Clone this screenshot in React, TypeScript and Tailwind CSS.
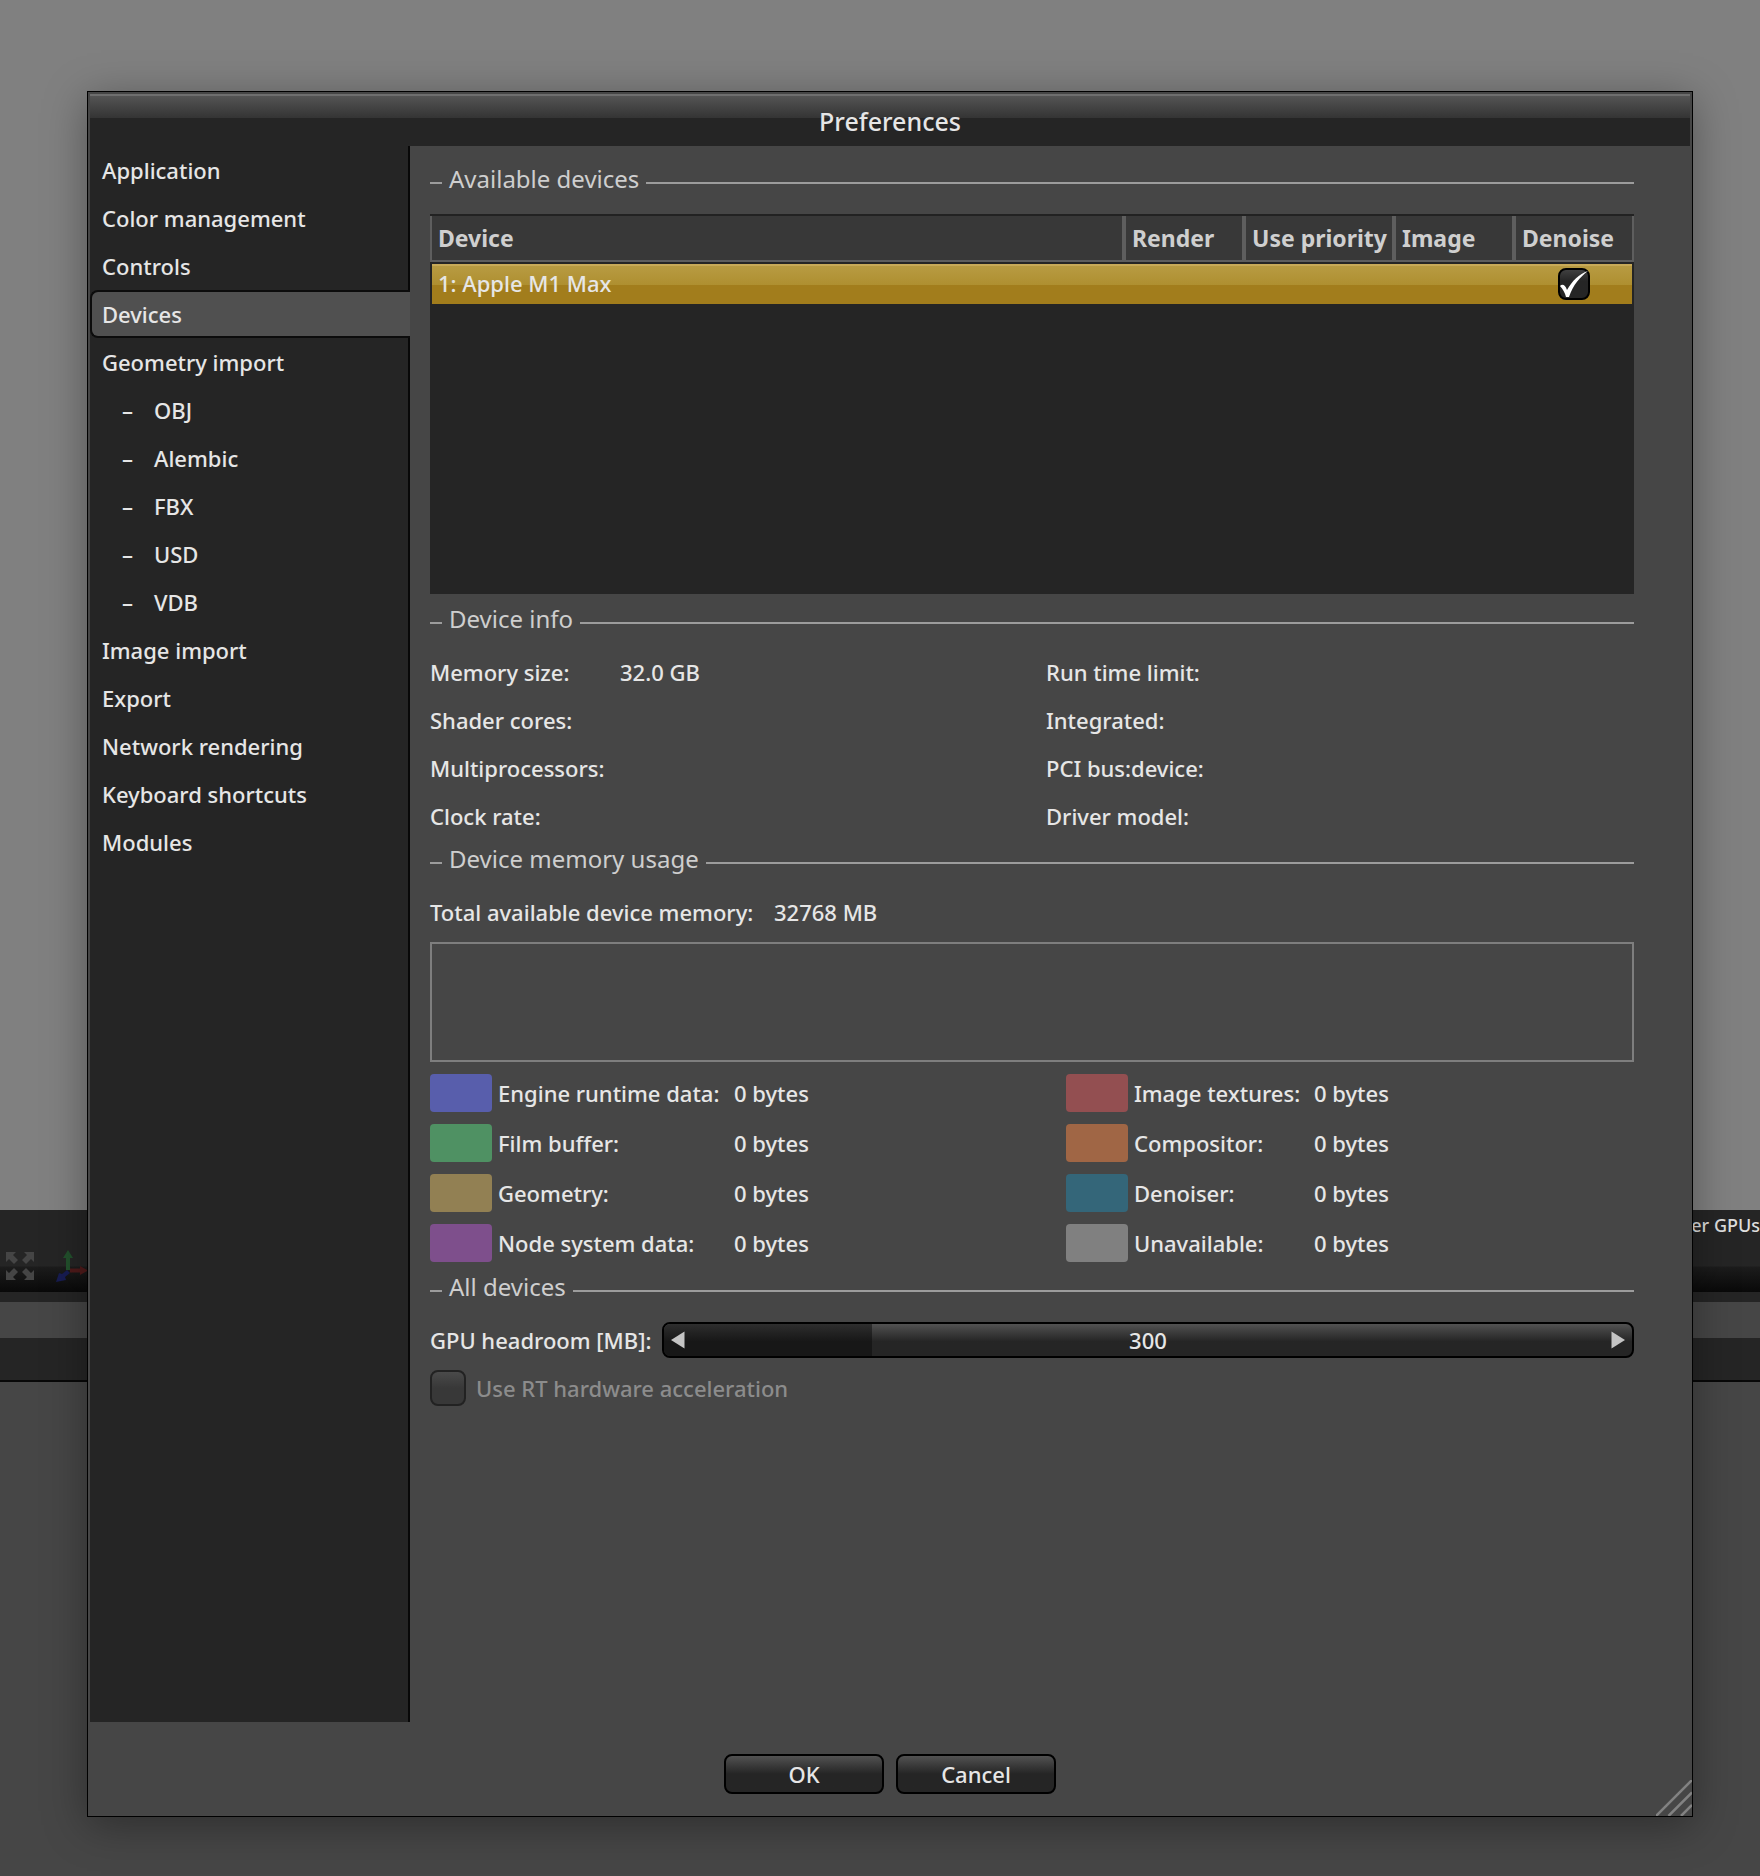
import { useState, type ReactNode } from "react";

type NavItem = { label: string; child?: boolean };

const NAV: NavItem[] = [
  { label: "Application" },
  { label: "Color management" },
  { label: "Controls" },
  { label: "Devices" },
  { label: "Geometry import" },
  { label: "OBJ", child: true },
  { label: "Alembic", child: true },
  { label: "FBX", child: true },
  { label: "USD", child: true },
  { label: "VDB", child: true },
  { label: "Image import" },
  { label: "Export" },
  { label: "Network rendering" },
  { label: "Keyboard shortcuts" },
  { label: "Modules" },
];

const COLUMNS = [
  { label: "Device", width: "" },
  { label: "Render", width: "w-[120px]" },
  { label: "Use priority", width: "w-[150px]" },
  { label: "Image", width: "w-[120px]" },
  { label: "Denoise", width: "w-[120px]" },
];

const USAGE_LEFT = [
  { label: "Engine runtime data:", color: "bg-[#585eac]" },
  { label: "Film buffer:", color: "bg-[#4f9163]" },
  { label: "Geometry:", color: "bg-[#928053]" },
  { label: "Node system data:", color: "bg-[#7e4f8c]" },
];

const USAGE_RIGHT = [
  { label: "Image textures:", color: "bg-[#934f51]" },
  { label: "Compositor:", color: "bg-[#a06645]" },
  { label: "Denoiser:", color: "bg-[#346679]" },
  { label: "Unavailable:", color: "bg-[#808080]" },
];

function SectionHeading({ children }: { children: ReactNode }) {
  return (
    <div className="mb-0.5 flex h-[46px] items-center">
      <span className="h-0.5 w-3 bg-[#9c9c9c]" />
      <h2 className="px-[7px] pb-2 text-[24px] leading-8 font-normal whitespace-nowrap text-[#cecece]">{children}</h2>
      <span className="h-0.5 flex-1 bg-[#9c9c9c]" />
    </div>
  );
}

function InfoRow({ label, value }: { label: string; value?: string }) {
  return (
    <div className="flex h-12 items-center">
      <dt className="w-[190px] shrink-0">{label}</dt>
      <dd>{value}</dd>
    </div>
  );
}

function UsageList({ items, labelWidth }: { items: typeof USAGE_LEFT; labelWidth: string }) {
  return (
    <dl className="flex flex-col gap-3">
      {items.map((item) => (
        <div key={item.label} className="flex h-[38px] items-center">
          <span className={`mr-1.5 h-[38px] w-[62px] rounded ${item.color}`} />
          <dt className={`${labelWidth} whitespace-nowrap`}>{item.label}</dt>
          <dd>0 bytes</dd>
        </div>
      ))}
    </dl>
  );
}

function ExpandIcon() {
  return (
    <svg viewBox="0 0 28 28" className="size-7" fill="#454545" aria-hidden="true">
      <path d="M0 0H10L7 3L12 8L8 12L3 7L0 10Z" />
      <path d="M28 0H18L21 3L16 8L20 12L25 7L28 10Z" />
      <path d="M0 28H10L7 25L12 20L8 16L3 21L0 18Z" />
      <path d="M28 28H18L21 25L16 20L20 16L25 21L28 18Z" />
    </svg>
  );
}

function AxesIcon() {
  return (
    <svg viewBox="0 0 34 34" className="h-[34px] w-[34px] shrink-0" aria-hidden="true">
      <path d="M10 20H14V8H17L12 0L7 8H10Z" fill="#22502c" />
      <path d="M14 18.5V22.5H24V25L32 20.5L24 16V18.5Z" fill="#4f1a1a" />
      <path d="M11 20L14 23L9 27L10 30L0 32L3 23L6 24L11 20Z" fill="#171c52" />
    </svg>
  );
}

function Backdrop() {
  return (
    <div className="col-start-1 row-start-1 flex min-w-0 flex-col overflow-hidden" aria-hidden="true">
      <div className="h-[1210px] bg-[#808080]" />
      <div className="flex h-[82px] items-start justify-between bg-[linear-gradient(#252525_0_56px,#1c1c1c_57px,#090909)] text-[18px]">
        <div className="flex items-start pt-10 pl-1.5">
          <span className="pt-0.5">
            <ExpandIcon />
          </span>
          <span className="ml-[22px]">
            <AxesIcon />
          </span>
        </div>
        <span className="pt-px leading-7 text-[#dedede]">er GPUs</span>
      </div>
      <div className="h-2.5 bg-[#252525]" />
      <div className="h-9 bg-[#464646]" />
      <div className="h-11 border-b-2 border-[#080808] bg-[#252525]" />
      <div className="flex-1 bg-[#464646]" />
    </div>
  );
}

function Sidebar({ current, onSelect }: { current: string; onSelect: (label: string) => void }) {
  return (
    <nav className="w-80 shrink-0 bg-[linear-gradient(#080808,#080808)] bg-[length:2px_100%] bg-right bg-no-repeat">
      <ul>
        {NAV.map(({ label, child }) => (
          <li key={label}>
            <button
              type="button"
              onClick={() => onSelect(label)}
              aria-current={label === current ? "page" : undefined}
              className={
                label === current
                  ? "flex h-12 w-full items-center rounded-l-lg border-2 border-r-0 border-[#0c0c0c] bg-[#505050] pl-2.5 text-left"
                  : "flex h-12 w-full items-center pl-3 text-left"
              }
            >
              {child && <span className="w-8 pr-8 pl-5">–</span>}
              <span>{label}</span>
            </button>
          </li>
        ))}
      </ul>
    </nav>
  );
}

function DeviceTable() {
  const [denoise, setDenoise] = useState(true);
  return (
    <div className="min-h-[380px] border-t-2 border-[#222] bg-[#252525]">
      <table className="w-full table-fixed border-separate border-spacing-0 text-left">
        <thead>
          <tr>
            {COLUMNS.map((column) => (
              <th
                key={column.label}
                scope="col"
                className={`${column.width} h-[46px] border-x-2 border-b-2 border-[#5e5e5e] bg-[#383838] p-0 pl-1.5 text-[23px] font-bold whitespace-nowrap text-[#cfcfcf]`}
              >
                {column.label}
              </th>
            ))}
          </tr>
        </thead>
      </table>
      <table className="mx-0.5 mt-0.5 w-[calc(100%-4px)] table-fixed border-collapse bg-[linear-gradient(#c8aa58_0_2px,#b89b42_2px,#ae8f30_21px,#a27d1c_21px)]">
        <tbody>
          <tr className="h-10">
            <td className="p-0 pb-0.5 pl-1.5">1: Apple M1 Max</td>
            <td className="w-[116px] p-0">
              <label className="relative mx-auto block size-8">
                <input
                  type="checkbox"
                  aria-label="Denoise"
                  checked={denoise}
                  onChange={(event) => setDenoise(event.target.checked)}
                  className="peer block size-8 appearance-none rounded-lg border-2 border-black bg-linear-to-b from-[#404040] to-[#252525] to-40%"
                />
                <svg
                  viewBox="0 0 32 32"
                  className="pointer-events-none absolute inset-0 hidden size-8 peer-checked:block"
                  fill="#fff"
                  aria-hidden="true"
                >
                  <path d="M30 3C22 9 15 17 11 29H8C7 25 5 21 2 18C4 16 7 16 9 22C14 13 21 6 30 3Z" />
                </svg>
              </label>
            </td>
          </tr>
        </tbody>
      </table>
    </div>
  );
}

const HEADROOM_MAX = 1396;

function HeadroomSlider() {
  const [value, setValue] = useState(300);
  const step = (delta: number) => setValue((v) => Math.min(HEADROOM_MAX, Math.max(0, v + delta)));
  return (
    <div className="relative flex h-9 flex-1 items-center overflow-hidden rounded-lg border-2 border-black bg-linear-to-b from-[#525252] to-[#252525] to-55%">
      <div
        className="absolute inset-y-0 left-0 bg-linear-to-b from-[#2e2e2e] to-[#171717] to-55%"
        style={{ width: `${(value / HEADROOM_MAX) * 100}%` }}
      />
      <button type="button" aria-label="Decrease headroom" onClick={() => step(-10)} className="relative pl-[7px]">
        <svg viewBox="0 0 14 18" className="h-[18px] w-3.5" fill="#c4c4c4" aria-hidden="true">
          <path d="M0 9L13.500 0.500V17.500Z" />
        </svg>
      </button>
      <input
        id="headroom"
        type="text"
        inputMode="numeric"
        value={value}
        onChange={(event) => setValue(Math.min(HEADROOM_MAX, Number(event.target.value) || 0))}
        className="relative h-8 min-w-0 flex-1 bg-transparent text-center outline-none"
      />
      <button type="button" aria-label="Increase headroom" onClick={() => step(10)} className="relative pr-[7px]">
        <svg viewBox="0 0 14 18" className="h-[18px] w-3.5" fill="#c4c4c4" aria-hidden="true">
          <path d="M14 9L0.500 0.500V17.500Z" />
        </svg>
      </button>
    </div>
  );
}

function DialogButton({ children }: { children: ReactNode }) {
  return (
    <button
      type="button"
      className="h-10 w-40 rounded-lg border-2 border-black bg-linear-to-b from-[#525252] to-[#252525] to-50%"
    >
      {children}
    </button>
  );
}

export default function App() {
  const [page, setPage] = useState("Devices");
  return (
    <div className="grid min-h-screen grid-cols-1 font-['Noto_Sans',sans-serif] text-[22px] leading-[30px] font-medium text-[#e6e6e6]">
      <Backdrop />
      <div
        role="dialog"
        aria-labelledby="dialog-title"
        className="relative col-start-1 row-start-1 mt-[91px] mr-[67px] mb-[59px] ml-[87px] flex flex-col border border-black bg-[#464646] px-0.5 pt-0.5 shadow-[0_8px_40px_rgba(0,0,0,0.35)]"
      >
        <header className="flex h-[52px] items-center justify-center border-t-2 border-[#6e6e6e] bg-[linear-gradient(#545454,#343434_22px,#252525_22px)]">
          <h1 id="dialog-title" className="text-[25px] font-medium">
            Preferences
          </h1>
        </header>

        <div className="flex flex-1">
          <div className="flex bg-[#252525]">
            <Sidebar current={page} onSelect={setPage} />
          </div>

          <main className="min-w-0 flex-1 pt-3.5 pr-14 pl-5">
            <SectionHeading>Available devices</SectionHeading>
            <div className="mt-2">
              <DeviceTable />
            </div>

            <div className="mt-1.5">
              <SectionHeading>Device info</SectionHeading>
            </div>
            <div className="flex">
              <dl className="w-[616px]">
                <InfoRow label="Memory size:" value="32.0 GB" />
                <InfoRow label="Shader cores:" />
                <InfoRow label="Multiprocessors:" />
                <InfoRow label="Clock rate:" />
              </dl>
              <dl className="flex-1">
                <InfoRow label="Run time limit:" />
                <InfoRow label="Integrated:" />
                <InfoRow label="PCI bus:device:" />
                <InfoRow label="Driver model:" />
              </dl>
            </div>

            <SectionHeading>Device memory usage</SectionHeading>
            <div className="flex h-12 items-center">
              <span className="w-[344px]">Total available device memory:</span>
              <span>32768 MB</span>
            </div>
            <div className="mt-1.5 h-[120px] border-2 border-[#7e7e7e]" />
            <div className="mt-3 mb-1.5 flex">
              <div className="w-[636px]">
                <UsageList items={USAGE_LEFT} labelWidth="w-[236px]" />
              </div>
              <UsageList items={USAGE_RIGHT} labelWidth="w-[180px]" />
            </div>

            <SectionHeading>All devices</SectionHeading>
            <div className="mt-2 flex items-center">
              <label htmlFor="headroom" className="w-[232px] whitespace-nowrap">
                GPU headroom [MB]:
              </label>
              <HeadroomSlider />
            </div>
            <label className="mt-3 flex items-center gap-2.5 text-[#8c8c8c]">
              <input
                type="checkbox"
                disabled
                className="size-9 appearance-none rounded-lg border-2 border-[#222] bg-linear-to-b from-[#4a4a4a] to-[#383838] to-50%"
              />
              Use RT hardware acceleration
            </label>
          </main>
        </div>

        <footer className="flex justify-center gap-3 pt-8 pb-[22px]">
          <DialogButton>OK</DialogButton>
          <DialogButton>Cancel</DialogButton>
        </footer>

        <svg
          viewBox="0 0 36 36"
          className="absolute right-0 bottom-0 size-9"
          stroke="#828282"
          strokeWidth="2.500"
          aria-hidden="true"
        >
          <path d="M0 36L36 0M12.500 36L36 12.500M25 36L36 25" />
        </svg>
      </div>
    </div>
  );
}
